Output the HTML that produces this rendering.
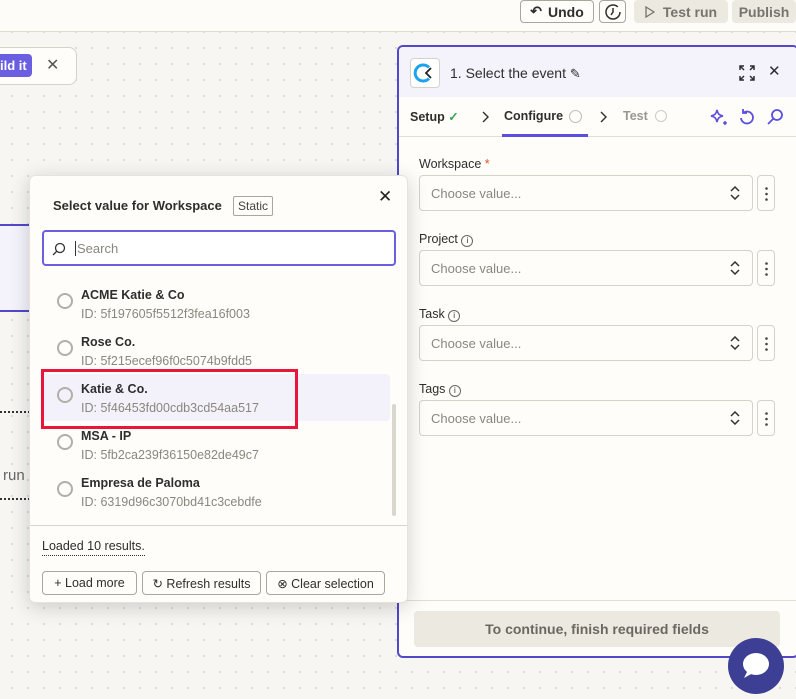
<!DOCTYPE html>
<html><head><meta charset="utf-8"><style>
*{box-sizing:border-box;margin:0;padding:0}
body{width:796px;height:692px;overflow:hidden;position:relative;font-family:"Liberation Sans",sans-serif;color:#2b2358;background-color:#f7f6f3;background-image:radial-gradient(circle,#d6d4cc 0.8px,transparent 1px);background-size:16px 16px;background-position:4px 8px}
.abs{position:absolute}
.top{left:0;top:0;width:796px;height:32px;background:#fdfcf9;border-bottom:1px solid #dedbd2}
.btn{position:absolute;border:1px solid #a9a69e;border-radius:4px;background:#fffdf9;font-size:14px;font-weight:bold;color:#2d2e2e;display:flex;align-items:center;justify-content:center;gap:6px}
.gbtn{position:absolute;background:#ece9e1;border-radius:4px;font-size:14px;font-weight:bold;color:#77746d;display:flex;align-items:center;justify-content:center;gap:8px}
.panel{left:397px;top:45px;width:402px;height:613px;border:2px solid #5248c8;border-radius:6px;background:#fffdf9;overflow:hidden}
.ph{height:50px;background:#f4f3fb;position:relative}
.tabs{height:40px;border-bottom:1px solid #e0ddd5;position:relative;font-size:12.5px;font-weight:bold;color:#2d2e2e}
.lbl{position:absolute;left:20px;font-size:12.5px;color:#2d2e2e}
.sel{position:absolute;left:20px;width:334px;height:36px;border:1px solid #d5d2ca;border-radius:4px;background:#fffdf9;font-size:13px;color:#8a877f;padding:10px 11px}
.sel svg{position:absolute;right:12px;top:10px}
.dots{position:absolute;left:358px;width:18px;height:36px;border:1px solid #d5d2ca;border-radius:4px;background:#fffdf9}
.dots svg{position:absolute;left:7px;top:11px}
.pop{left:29px;top:175px;width:379px;height:428px;background:#fffdf9;border-radius:6px;box-shadow:0 4px 20px rgba(0,0,0,.18);border:1px solid #e6e3db}
.item{position:absolute;left:24px;width:336px;height:46px}
.item .r{position:absolute;left:3px;top:11px;width:16px;height:16px;border:2px solid #b2afa8;border-radius:50%}
.item .n{position:absolute;left:27px;top:6px;font-size:12.5px;font-weight:bold;color:#2d2e2e}
.item .i{position:absolute;left:27px;top:25px;font-size:12.5px;color:#8a877f}
.sb{position:absolute;border:1px solid #a9a69e;border-radius:4px;height:24px;font-size:12.5px;color:#2d2e2e;display:flex;align-items:center;justify-content:center;gap:4px;top:395px}
</style></head><body>
<div class="abs top"></div>
<div class="btn" style="left:520px;top:0;width:74px;height:23px"><span style="font-size:14px">↶</span>Undo</div>
<div class="btn" style="left:599px;top:0;width:27px;height:23px"><svg width="18" height="18" viewBox="0 0 18 18"><circle cx="9" cy="9" r="7" fill="none" stroke="#2d2e2e" stroke-width="1.5" stroke-dasharray="38 6"/><path d="M9 5v4l-2 3" stroke="#2d2e2e" stroke-width="1.5" fill="none"/></svg></div>
<div class="gbtn" style="left:634px;top:0;width:94px;height:23px"><svg width="10" height="12"><path d="M1 1l8 5-8 5z" fill="none" stroke="#77746d" stroke-width="1.3"/></svg>Test run</div>
<div class="gbtn" style="left:732px;top:0;width:64px;height:23px">Publish</div>

<div class="abs" style="left:-10px;top:47px;width:87px;height:38px;border:1px solid #d5d2ca;border-radius:8px;background:#fffdf9"></div>
<div class="abs" style="left:-10px;top:54px;width:42px;height:23px;background:#6a5fe0;border-radius:4px;color:#fff;font-weight:bold;font-size:13px;padding:4px 0 0 10px">ild it</div>
<div class="abs" style="left:46px;top:55px;font-size:16px;color:#555">✕</div>

<div class="abs" style="left:-5px;top:224px;width:40px;height:88px;border:2px solid #5248c8;background:#f4f3fb;border-radius:4px"></div>
<div class="abs" style="left:0;top:411px;width:30px;border-top:2px dotted #333"></div>
<div class="abs" style="left:3px;top:467px;font-size:15px;color:#666">run</div>
<div class="abs" style="left:0;top:498px;width:30px;border-top:2px dotted #333"></div>

<div class="abs panel">
 <div class="ph">
  <div class="abs" style="left:11px;top:11px;width:30px;height:30px;border:1px solid #d5d2ca;border-radius:4px;background:#fff"><svg width="28" height="28" viewBox="0 0 28 28"><path d="M18 8.5A8 8 0 1 0 18 19.5" fill="none" stroke="#1aa3f0" stroke-width="3"/><path d="M20 9l-5 5 5 5" fill="none" stroke="#222" stroke-width="1.8"/></svg></div>
  <div class="abs" style="left:51px;top:18px;font-size:14px;color:#2d2e2e">1. Select the event <span style="font-size:13px">✎</span></div>
  <svg class="abs" style="left:340px;top:18px" width="16" height="16" viewBox="0 0 16 16" fill="none" stroke="#2d2e2e" stroke-width="1.5"><path d="M1 5V1h4M11 1h4v4M15 11v4h-4M5 15H1v-4M1 1l4 4M15 1l-4 4M15 15l-4-4M1 15l4-4"/></svg>
  <div class="abs" style="left:369px;top:15px;font-size:15px;color:#2d2e2e">✕</div>
 </div>
 <div class="tabs">
  <div class="abs" style="left:11px;top:12px">Setup <span style="color:#3aa55c">✓</span></div>
  <svg class="abs" style="left:82px;top:14px" width="8" height="12" viewBox="0 0 8 12" fill="none" stroke="#2d2e2e" stroke-width="1.4"><path d="M2 1l5 5-5 5"/></svg>
  <div class="abs" style="left:105px;top:12px">Configure</div>
  <div class="abs" style="left:170px;top:13px;width:13px;height:13px;border:1.5px solid #bbb;border-radius:50%"></div>
  <div class="abs" style="left:103px;top:37px;width:86px;height:3px;background:#5b4fe0"></div>
  <svg class="abs" style="left:200px;top:14px" width="8" height="12" viewBox="0 0 8 12" fill="none" stroke="#2d2e2e" stroke-width="1.4"><path d="M2 1l5 5-5 5"/></svg>
  <div class="abs" style="left:224px;top:12px;color:#9a978f">Test</div>
  <div class="abs" style="left:256px;top:13px;width:12px;height:12px;border:1.5px solid #ccc;border-radius:50%"></div>
  <svg class="abs" style="left:311px;top:11px" width="18" height="18" viewBox="0 0 18 18" fill="none" stroke="#5b4fe0" stroke-width="1.6"><path d="M7 2c1 4 2 5 6 6-4 1-5 2-6 6-1-4-2-5-6-6 4-1 5-2 6-6zM15 13v4M13 15h4"/></svg>
  <svg class="abs" style="left:340px;top:11px" width="16" height="18" viewBox="0 0 16 18" fill="none" stroke="#5b4fe0" stroke-width="1.8"><path d="M4 5a6 6 0 1 1-2 5M4 1v4h4"/></svg>
  <svg class="abs" style="left:367px;top:11px" width="18" height="18" viewBox="0 0 18 18" fill="none" stroke="#5b4fe0" stroke-width="1.8"><circle cx="11" cy="7" r="5"/><path d="M7 11l-5 5"/></svg>
 </div>
 <div class="lbl" style="top:110px">Workspace <span style="color:#e5532a">*</span></div>
 <div class="sel" style="top:128px">Choose value...<svg width="10" height="14" viewBox="0 0 10 14" fill="none" stroke="#333" stroke-width="1.5"><path d="M1 5l4-4 4 4M1 9l4 4 4-4"/></svg></div><div class="dots" style="top:128px"><svg width="3" height="14"><circle cx="1.5" cy="1.5" r="1.3" fill="#444"/><circle cx="1.5" cy="7" r="1.3" fill="#444"/><circle cx="1.5" cy="12.5" r="1.3" fill="#444"/></svg></div>
 <div class="lbl" style="top:185px">Project <span style="display:inline-block;width:12px;height:12px;border:1px solid #666;border-radius:50%;font-size:8px;text-align:center;line-height:10px">i</span></div>
 <div class="sel" style="top:203px">Choose value...<svg width="10" height="14" viewBox="0 0 10 14" fill="none" stroke="#333" stroke-width="1.5"><path d="M1 5l4-4 4 4M1 9l4 4 4-4"/></svg></div><div class="dots" style="top:203px"><svg width="3" height="14"><circle cx="1.5" cy="1.5" r="1.3" fill="#444"/><circle cx="1.5" cy="7" r="1.3" fill="#444"/><circle cx="1.5" cy="12.5" r="1.3" fill="#444"/></svg></div>
 <div class="lbl" style="top:260px">Task <span style="display:inline-block;width:12px;height:12px;border:1px solid #666;border-radius:50%;font-size:8px;text-align:center;line-height:10px">i</span></div>
 <div class="sel" style="top:278px">Choose value...<svg width="10" height="14" viewBox="0 0 10 14" fill="none" stroke="#333" stroke-width="1.5"><path d="M1 5l4-4 4 4M1 9l4 4 4-4"/></svg></div><div class="dots" style="top:278px"><svg width="3" height="14"><circle cx="1.5" cy="1.5" r="1.3" fill="#444"/><circle cx="1.5" cy="7" r="1.3" fill="#444"/><circle cx="1.5" cy="12.5" r="1.3" fill="#444"/></svg></div>
 <div class="lbl" style="top:335px">Tags <span style="display:inline-block;width:12px;height:12px;border:1px solid #666;border-radius:50%;font-size:8px;text-align:center;line-height:10px">i</span></div>
 <div class="sel" style="top:353px">Choose value...<svg width="10" height="14" viewBox="0 0 10 14" fill="none" stroke="#333" stroke-width="1.5"><path d="M1 5l4-4 4 4M1 9l4 4 4-4"/></svg></div><div class="dots" style="top:353px"><svg width="3" height="14"><circle cx="1.5" cy="1.5" r="1.3" fill="#444"/><circle cx="1.5" cy="7" r="1.3" fill="#444"/><circle cx="1.5" cy="12.5" r="1.3" fill="#444"/></svg></div>
 <div class="abs" style="left:0;top:553px;width:100%;border-top:1px solid #e0ddd5"></div>
 <div class="abs" style="left:15px;top:564px;width:366px;height:36px;background:#ece9e1;border-radius:4px;font-size:14px;font-weight:bold;color:#6b6861;text-align:center;line-height:36px">To continue, finish required fields</div>
</div>

<div class="abs" style="left:728px;top:638px;width:56px;height:56px;border-radius:50%;background:#3d3f94"><svg width="56" height="56" viewBox="0 0 56 56"><ellipse cx="28" cy="26" rx="13" ry="11" fill="#fff"/><path d="M20 32l-4 8 9-5z" fill="#fff"/></svg></div>

<div class="abs pop">
 <div class="abs" style="left:23px;top:22px;font-size:13px;font-weight:bold;color:#2d2e2e">Select value for Workspace</div>
 <div class="abs" style="left:203px;top:20px;border:1px solid #a9a69e;border-radius:2px;font-size:12px;color:#444;padding:2px 4px">Static</div>
 <div class="abs" style="left:348px;top:11px;font-size:17px;color:#222">✕</div>
 <div class="abs" style="left:12px;top:54px;width:354px;height:36px;border:2px solid #6a5fe0;border-radius:4px;background:#fff"><svg class="abs" style="left:8px;top:10px" width="14" height="14" viewBox="0 0 14 14" fill="none" stroke="#333" stroke-width="1.3"><circle cx="8" cy="6" r="4.5"/><path d="M5 9l-4 4"/></svg><span class="abs" style="left:31px;top:9px;font-size:13px;color:#8a877f;border-left:1px solid #333;padding-left:1px">Search</span></div>
 <div class="abs" style="left:11px;top:198px;width:349px;height:47px;background:#f3f2fa;border-radius:4px"></div>
 <div class="item" style="top:106px"><div class="r"></div><div class="n">ACME Katie &amp; Co</div><div class="i">ID: 5f197605f5512f3fea16f003</div></div>
 <div class="item" style="top:153px"><div class="r"></div><div class="n">Rose Co.</div><div class="i">ID: 5f215ecef96f0c5074b9fdd5</div></div>
 <div class="item" style="top:200px"><div class="r"></div><div class="n">Katie &amp; Co.</div><div class="i">ID: 5f46453fd00cdb3cd54aa517</div></div>
 <div class="item" style="top:247px"><div class="r"></div><div class="n">MSA - IP</div><div class="i">ID: 5fb2ca239f36150e82de49c7</div></div>
 <div class="item" style="top:294px"><div class="r"></div><div class="n">Empresa de Paloma</div><div class="i">ID: 6319d96c3070bd41c3cebdfe</div></div>
 <div class="abs" style="left:362px;top:228px;width:4px;height:112px;background:#d9d6ce;border-radius:2px"></div>
 <div class="abs" style="left:11px;top:193px;width:257px;height:60px;border:3px solid #e8163a"></div>
 <div class="abs" style="left:0;top:349px;width:100%;border-top:1px solid #d9d6ce"></div>
 <div class="abs" style="left:12px;top:363px;font-size:12.5px;color:#2d2e2e;border-bottom:1px dotted #333;padding-bottom:2px">Loaded 10 results.</div>
 <div class="sb" style="left:12px;width:95px">+ Load more</div>
 <div class="sb" style="left:112px;width:119px">↻ Refresh results</div>
 <div class="sb" style="left:236px;width:119px">⊗ Clear selection</div>
</div>
</body></html>
